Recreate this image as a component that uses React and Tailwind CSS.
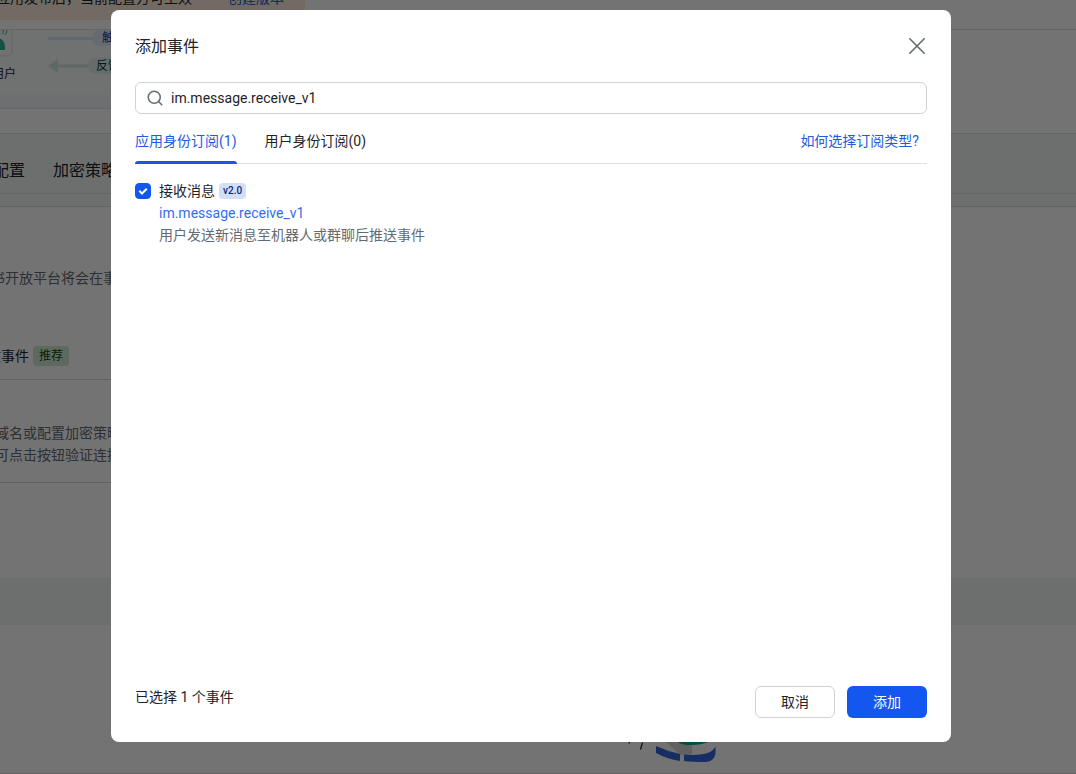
import { useState } from 'react';
import { Search } from 'lucide-react';

const tabs = [
    { id: 'app', label: '应用身份订阅', count: 1 },
    { id: 'user', label: '用户身份订阅', count: 0 },
];

const events = [
    { id: 'im.message.receive_v1', name: '接收消息', version: 'v2.0', desc: '用户发送新消息至机器人或群聊后推送事件' },
];

function CloseIcon() {
    return (
        <svg className="size-5" viewBox="0 0 20 20" fill="none" stroke="currentColor" strokeWidth="1.6" strokeLinecap="round">
            <path d="M2.800 2.800l14.400 14.400M17.200 2.800L2.800 17.200" />
        </svg>
    );
}

function FlowDiagram() {
    return (
        <div className="flex h-[79px] w-1/2 border-b border-[#dbe3ec] bg-gradient-to-b from-[#f8fafa] from-80% to-[#eef3fa] pl-10">
            <div className="flex w-12 flex-col">
                <svg className="h-7 w-4" viewBox="0 0 16 28" fill="none">
                    <path d="M0 26h7a5 5 0 0 0 5-5V0" stroke="#dee0e3" />
                    <path d="M0 20V8.500c3 1 5 5 5 8.500v3z" fill="#2fb596" />
                    <path d="M2 4q1.500-1 1.500-4M5 5q2-2 2-5" stroke="#2fb596" />
                </svg>
                <span className="mt-2 -ml-2 text-xs leading-4 whitespace-nowrap">用户</span>
            </div>
            <div className="flex flex-col">
                <div className="flex h-4 items-center">
                    <span className="h-[3px] w-11 bg-[#dbe4f6]" />
                    <span className="rounded-full bg-[#e4ebfb] px-2.5 text-xs leading-4 whitespace-nowrap text-[#1a3f9e]">触发事件</span>
                </div>
                <div className="mt-3 flex h-4 items-center">
                    <svg className="h-4 w-10" viewBox="0 0 40 16">
                        <path d="M0 8L10 1v5.500h30v3H10V15z" fill="#cde9e2" />
                    </svg>
                    <span className="rounded-full bg-[#dff0ec] px-2 text-xs leading-4 whitespace-nowrap text-[#04423a]">反馈结果</span>
                </div>
            </div>
        </div>
    );
}

function Illustration() {
    return (
        <svg className="h-8 w-24" viewBox="0 0 96 32" fill="none">
            <path d="M8 0l-1 3.500M20.500 2.500l-2 7" stroke="#1f2329" strokeWidth="1.200" />
            <path d="M34 0h40l10 8v6l-25 4-23-6z" fill="#fbfbfb" />
            <path d="M42 0h28v14l-12 1z" fill="#d8d8d8" />
            <path d="M53 0h36c-5 4-13 5-21 5-7 0-12-2-15-5z" fill="#00b28c" />
            <path d="M34 6q11 5 24 8v7q-13-2-24-8z" fill="#3467dc" />
            <path d="M62 14.500c12 1 27 1 31.500-8v7c-1 6-5 8.500-11.500 8.500-7 0-14-.3-20-1z" fill="#3467dc" />
        </svg>
    );
}

function EventSettingsPage() {
    return (
        <main className="h-screen overflow-hidden border-b border-[#e3d8d8] bg-white text-sm leading-[22px] text-[#1f2329]">
            {/* scrolled a little down and to the right */}
            <div className="-mt-6 -ml-10">
                <div className="flex h-11 w-[345px] items-center gap-9 bg-[#fbeddd] pl-9 whitespace-nowrap">
                    <span>应用发布后，当前配置方可生效</span>
                    <a href="#version" className="text-[#245bdb]">创建版本</a>
                </div>
                <div className="h-2.5 border-b border-[#dee0e3]" />
                <FlowDiagram />

                <nav className="mt-6 flex h-[61px] gap-7 border-y border-[#dce2e1] bg-[#f1f7f5] pt-[25px] pl-px text-base leading-6 whitespace-nowrap">
                    <a href="#events">事件配置</a>
                    <a href="#encrypt">加密策略</a>
                </nav>
                <div className="h-[13px] border-b border-[#dce2e1] bg-[#f1f7f5]" />

                <p className="pt-15 pl-[17px] text-[#646a73]">飞书开放平台将会在事件发生时</p>
                <div className="mt-14 flex w-1/2 items-center gap-1 border-b border-[#d5d7da] pb-3 pl-[13px]">
                    <span>接收事件</span>
                    <span className="rounded bg-[#d0ecd3] px-1.5 text-xs leading-5 text-[#124b0c]">推荐</span>
                </div>
                <div className="w-1/2 border-b border-[#d5d7da] pt-[42px] pb-4 pl-[21px] text-[#646a73]">
                    <p>网域名或配置加密策略</p>
                    <p>后可点击按钮验证连接</p>
                </div>
                <div className="mt-[95px] h-[47px] bg-[#f1f7f5]" />
                <div className="mt-[115px] flex justify-center pl-[303px]">
                    <Illustration />
                </div>
            </div>
        </main>
    );
}

function EventRow({ event, checked, onToggle }) {
    return (
        <li className="flex gap-2">
            <span className="relative mt-[3px] size-4 shrink-0">
                <input
                    type="checkbox"
                    id={event.id}
                    checked={checked}
                    onChange={onToggle}
                    className="block size-4 appearance-none rounded border border-[#8f959e] checked:border-[#1456f0] checked:bg-[#1456f0]"
                />
                {checked && (
                    <svg className="pointer-events-none absolute inset-0" viewBox="0 0 16 16" fill="none" stroke="#fff" strokeWidth="2">
                        <path d="M4.300 7.800l2.700 2.700 4.800-4.800" />
                    </svg>
                )}
            </span>
            <div>
                <div className="flex items-center gap-1">
                    <label htmlFor={event.id}>{event.name}</label>
                    <span className="rounded bg-[#d3defb] px-1 text-[10px] leading-4 font-medium text-[#0c296e]">{event.version}</span>
                </div>
                <a href="#doc" className="block text-[#336df4]">{event.id}</a>
                <p className="text-[#646a73]">{event.desc}</p>
            </div>
        </li>
    );
}

function AddEventDialog() {
    const [activeTab, setActiveTab] = useState('app');
    const [selected, setSelected] = useState(['im.message.receive_v1']);

    const toggle = (id) => {
        setSelected(selected.includes(id) ? selected.filter((s) => s !== id) : [...selected, id]);
    };

    return (
        <div role="dialog" aria-labelledby="dialog-title" className="flex min-h-[732px] w-full max-w-[840px] flex-col rounded-lg bg-white px-6 pt-5 pb-6 text-sm leading-[22px] text-[#1f2329]">
            <header className="flex h-8 items-center justify-between">
                <h2 id="dialog-title" className="pt-0.5 text-base">添加事件</h2>
                <button aria-label="关闭" className="text-[#646a73]"><CloseIcon /></button>
            </header>

            <div className="mt-5 flex h-8 items-center gap-[7px] rounded-md border border-[#d0d3d6] px-2.5">
                <Search className="size-[18px] text-[#646a73]" strokeWidth={2} />
                <input aria-label="搜索事件" defaultValue="im.message.receive_v1" className="min-w-0 flex-1 outline-none" />
            </div>

            <div className="mt-4 flex h-[34px] items-start justify-between border-b border-[#dee0e3]">
                <div role="tablist" className="flex h-[34px] gap-7">
                    {tabs.map((tab) => (
                        <button
                            key={tab.id}
                            role="tab"
                            aria-selected={activeTab === tab.id}
                            onClick={() => setActiveTab(tab.id)}
                            className={`flex flex-col justify-between ${activeTab === tab.id ? 'text-[#245bdb]' : ''}`}
                        >
                            <span>{tab.label}({tab.count})</span>
                            {activeTab === tab.id && <span className="h-[3px] w-full rounded-t-sm bg-[#1c55e0]" />}
                        </button>
                    ))}
                </div>
                <a href="#help" className="pr-2 text-[#245bdb]">如何选择订阅类型?</a>
            </div>

            <ul className="mt-4 flex-1">
                {activeTab === 'app' && events.map((event) => (
                    <EventRow key={event.id} event={event} checked={selected.includes(event.id)} onToggle={() => toggle(event.id)} />
                ))}
            </ul>

            <footer className="flex items-start justify-between">
                <span>已选择 {selected.length} 个事件</span>
                <div className="flex gap-3">
                    <button className="h-8 w-20 rounded-md border border-[#d0d3d6]">取消</button>
                    <button className="h-8 w-20 rounded-md bg-[#1456f0] text-white">添加</button>
                </div>
            </footer>
        </div>
    );
}

export default function App() {
    return (
        <div className="font-[Roboto,'Noto_Sans_CJK_SC',sans-serif]">
            <EventSettingsPage />
            <div className="fixed inset-0 flex items-start justify-center overflow-auto bg-black/55 pt-2.5 pr-3.5">
                <AddEventDialog />
            </div>
        </div>
    );
}
